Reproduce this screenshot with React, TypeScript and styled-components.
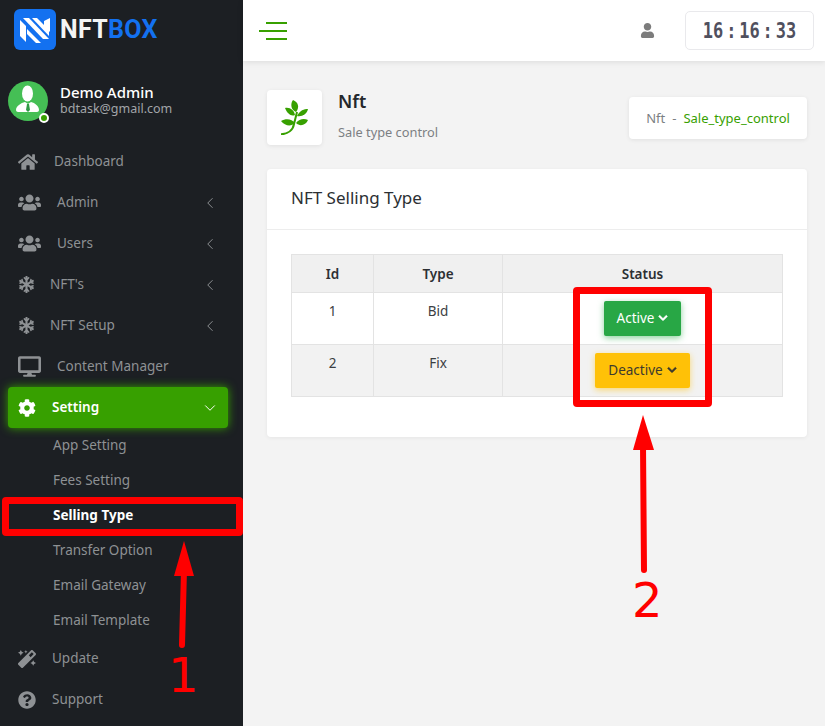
import React from "react";
import styled, { createGlobalStyle } from "styled-components";
import {
  FaHome,
  FaUsers,
  FaSnowflake,
  FaDesktop,
  FaCog,
  FaMagic,
  FaQuestionCircle,
  FaUser,
  FaChevronDown,
} from "react-icons/fa";
import { ChevronLeft, ChevronDown } from "lucide-react";

const GREEN = "#37a000";
const RED = "#ff0000";

const GlobalStyle = createGlobalStyle`
  html, body {
    margin: 0;
    padding: 0;
    height: 100%;
    overflow: hidden;
  }
  body {
    font-family: "Noto Sans", "Open Sans", sans-serif;
    background: #f3f3f3;
  }
  * { box-sizing: border-box; }
`;

const Shell = styled.div`
  position: relative;
  display: flex;
  width: 825px;
  height: 726px;
  overflow: hidden;
`;

const Sidebar = styled.aside`
  flex: 0 0 243px;
  background: #1c1f23;
  display: flex;
  flex-direction: column;
`;

const Brand = styled.div`
  display: flex;
  align-items: center;
  height: 58px;
  padding: 0 0 0 14px;
  gap: 4px;
`;

const BrandName = styled.span`
  font-family: "Roboto", sans-serif;
  font-size: 25px;
  font-weight: 700;
  letter-spacing: 0.3px;
  color: #f4f4f4;

  b {
    color: #1371f0;
    font-weight: 700;
  }
`;

const UserBlock = styled.div`
  display: flex;
  align-items: center;
  gap: 12px;
  padding: 3px 0 0 8px;
  height: 83px;
`;

const Avatar = styled.div`
  position: relative;
  width: 40px;
  height: 40px;
  border-radius: 50%;
  background: #45bf55;
`;

const OnlineDot = styled.span`
  position: absolute;
  right: -1px;
  bottom: -2px;
  width: 10px;
  height: 10px;
  border-radius: 50%;
  background: ${GREEN};
  border: 2px solid #fff;
`;

const UserText = styled.div`
  display: flex;
  flex-direction: column;
  margin-top: -4px;
`;

const UserName = styled.span`
  font-size: 15px;
  line-height: 18px;
  font-weight: 500;
  color: #fff;
`;

const UserMail = styled.span`
  font-size: 12.5px;
  line-height: 15px;
  color: #a2a5a9;
`;

const Nav = styled.nav`
  display: flex;
  flex-direction: column;
`;

const NavItem = styled.div<{ $active?: boolean; $gap: number }>`
  display: flex;
  align-items: center;
  height: 41px;
  margin: 0 15px 0 8px;
  padding: 0 9px 0 10px;
  gap: ${(p) => p.$gap}px;
  border-radius: 4px;
  font-size: 13.5px;
  color: ${(p) => (p.$active ? "#fff" : "#8e9194")};
  font-weight: ${(p) => (p.$active ? 600 : 400)};
  background: ${(p) => (p.$active ? GREEN : "transparent")};
  box-shadow: ${(p) => (p.$active ? `0 0 10px ${GREEN}` : "none")};
`;

const NavIconSlot = styled.span<{ $active?: boolean }>`
  display: inline-flex;
  align-items: center;
  color: ${(p) => (p.$active ? "#fff" : "#8e9194")};
`;

const NavLabel = styled.span`
  flex: 1;
  white-space: nowrap;
  padding-bottom: 2px;
`;

const SubNav = styled.div`
  display: flex;
  flex-direction: column;
  padding: 0 0 0 53px;
`;

const SubItem = styled.div<{ $active?: boolean }>`
  height: 35px;
  line-height: 35px;
  font-size: 13.5px;
  white-space: nowrap;
  color: ${(p) => (p.$active ? "#fff" : "#8e9194")};
  font-weight: ${(p) => (p.$active ? 700 : 400)};
`;

const Main = styled.main`
  flex: 1;
  display: flex;
  flex-direction: column;
  min-width: 0;
`;

const TopBar = styled.header`
  height: 61px;
  background: #fff;
  box-shadow: 0 1px 6px rgba(0, 0, 0, 0.1);
  display: flex;
  align-items: center;
  padding: 0 11px 0 16px;
`;

const Burger = styled.div`
  display: flex;
  flex-direction: column;
  align-items: flex-end;
  gap: 6px;
  width: 28px;
  flex: 0 0 28px;
`;

const BurgerLine = styled.span<{ $w: number }>`
  display: block;
  height: 2px;
  width: ${(p) => p.$w}px;
  background: ${GREEN};
`;

const TopRight = styled.div`
  margin-left: auto;
  display: flex;
  align-items: center;
  gap: 30px;
  color: #7c7c7c;
`;

const Clock = styled.div`
  width: 129px;
  height: 39px;
  border: 1px solid #e9e9ec;
  border-radius: 5px;
  display: flex;
  align-items: center;
  justify-content: center;
  gap: 6px;
  font-family: "DejaVu Sans Mono", monospace;
  font-size: 17px;
  font-weight: 700;
  color: #50505e;
`;

const ClockPart = styled.span`
  display: inline-block;
  transform: scaleY(1.2);
`;

const ClockColon = styled(ClockPart)`
  width: 4px;
  display: inline-flex;
  justify-content: center;
`;

const Content = styled.div`
  padding: 29px 18px 0 24px;
  display: flex;
  flex-direction: column;
  gap: 24px;
`;

const PageHead = styled.div`
  display: flex;
  align-items: flex-start;
`;

const LeafBox = styled.div`
  width: 55px;
  height: 55px;
  background: #fff;
  border-radius: 4px;
  box-shadow: 0 1px 4px rgba(0, 0, 0, 0.08);
  display: flex;
  align-items: center;
  justify-content: center;
`;

const PageTitles = styled.div`
  margin-left: 16px;
  display: flex;
  flex-direction: column;
`;

const PageTitle = styled.h1`
  margin: -1px 0 0;
  font-size: 18px;
  line-height: 24px;
  font-weight: 600;
  color: #24272b;
`;

const PageSub = styled.span`
  margin-top: 9px;
  font-size: 12.8px;
  line-height: 20px;
  color: #7c7f83;
`;

const Crumbs = styled.div`
  margin: 7px 0 0 auto;
  height: 42px;
  width: 178px;
  background: #fff;
  border-radius: 4px;
  box-shadow: 0 1px 4px rgba(0, 0, 0, 0.08);
  display: flex;
  align-items: center;
  justify-content: center;
  gap: 7px;
  font-size: 13px;
  color: #7c7f83;
  white-space: nowrap;
`;

const CrumbActive = styled.span`
  color: ${GREEN};
`;

const Card = styled.section`
  height: 268px;
  background: #fff;
  border-radius: 4px;
  box-shadow: 0 1px 4px rgba(0, 0, 0, 0.06);
`;

const CardHead = styled.div`
  height: 61px;
  border-bottom: 1px solid #ededed;
  display: flex;
  align-items: center;
  padding: 0 24px 3px;
  font-size: 17px;
  color: #2c2f33;
`;

const CardBody = styled.div`
  padding: 24px 24px 0;
`;

const Table = styled.table`
  width: 491px;
  table-layout: fixed;
  border-collapse: collapse;
  font-size: 13.5px;
  color: #3b3e42;
`;

const Th = styled.th<{ $w: number }>`
  width: ${(p) => p.$w}px;
  height: 38px;
  background: #f0f0f0;
  border: 1px solid #e3e3e3;
  font-weight: 600;
  color: #2c2f33;
`;

const Row = styled.tr<{ $shaded?: boolean }>`
  background: ${(p) => (p.$shaded ? "#f2f2f2" : "#fff")};
`;

const Td = styled.td`
  height: 52px;
  border: 1px solid #e3e3e3;
  text-align: center;
  vertical-align: top;
  padding-top: 9px;
  line-height: 18px;
`;

const StatusTd = styled(Td)`
  padding: 8px 0 0;
`;

const StatusButton = styled.button<{ $bg: string; $fg: string }>`
  display: inline-flex;
  align-items: center;
  justify-content: center;
  gap: 4px;
  height: 35px;
  padding: 0 13px 2px;
  border: none;
  border-radius: 2px;
  font-family: inherit;
  font-size: 13.5px;
  background: ${(p) => p.$bg};
  color: ${(p) => p.$fg};
  box-shadow: 0 2px 6px ${(p) => p.$bg}88;

  svg {
    stroke: currentColor;
    stroke-width: 30px;
  }
`;

const RedBox = styled.div<{ $l: number; $t: number; $w: number; $h: number }>`
  position: absolute;
  left: ${(p) => p.$l}px;
  top: ${(p) => p.$t}px;
  width: ${(p) => p.$w}px;
  height: ${(p) => p.$h}px;
  border: 7px solid ${RED};
  border-radius: 4px;
`;

const Digit = styled.span<{ $l: number; $t: number }>`
  position: absolute;
  left: ${(p) => p.$l}px;
  top: ${(p) => p.$t}px;
  font-family: "DejaVu Sans", sans-serif;
  font-size: 48px;
  line-height: 48px;
  color: ${RED};
`;

const ArrowLayer = styled.svg`
  position: absolute;
  left: 0;
  top: 0;
  pointer-events: none;
`;

const LogoMark = () => (
  <svg width="42" height="41" viewBox="0 0 42 41">
    <rect width="42" height="41" rx="6" fill="#1371f0" />
    <g fill="#fff">
      <path d="M6 11l6 6v16l-6-6z" />
      <path d="M9 9h6l20 21h-6z" />
      <path d="M18 9h5l12 12v6z" />
      <path d="M13 20l14 14h-5l-9-9z" />
      <path d="M30 12l6-3v14l-6-6z" />
    </g>
  </svg>
);

const AvatarFigure = () => (
  <svg width="40" height="40" viewBox="0 0 40 40">
    <ellipse cx="19.5" cy="12.5" rx="5.5" ry="8" fill="#fff" />
    <path d="M8 29c0-4 5-7 9-8l3 2 3-2c4 1 8 4 8 8 0 1-1 2-2 2H10c-1 0-2-1-2-2z" fill="#fff" />
    <path d="M19 23h2l1 6-2 2-2-2z" fill="#2f9a46" />
  </svg>
);

const LeafIcon = () => (
  <svg width="27" height="35" viewBox="9 8 27 35" fill={GREEN}>
    <path d="M9 42.3C16 42 21 38 22 32L25 20" fill="none" stroke={GREEN} strokeWidth="2" />
    <path d="M24 20C19 18 18 12 21 8C26 10 28 15 24 20z" />
    <path d="M23 23C19 25 15 21 13 16C18 15 22 18 23 23z" />
    <path d="M25 24C28 18 32 17 36 17C35 22 30 25 25 24z" />
    <path d="M23 31C19 35 13 34 9 29C14 26 20 27 23 31z" />
    <path d="M24 31C27 27 32 26 36 28C34 33 28 35 24 31z" />
  </svg>
);

const App = () => {
  return (
    <Shell>
      <GlobalStyle />
      <Sidebar>
        <Brand>
          <LogoMark />
          <BrandName>
            NFT<b>BOX</b>
          </BrandName>
        </Brand>
        <UserBlock>
          <Avatar>
            <AvatarFigure />
            <OnlineDot />
          </Avatar>
          <UserText>
            <UserName>Demo Admin</UserName>
            <UserMail>bdtask@gmail.com</UserMail>
          </UserText>
        </UserBlock>
        <Nav>
          <NavItem $gap={16}>
            <NavIconSlot><FaHome size={20} /></NavIconSlot>
            <NavLabel>Dashboard</NavLabel>
          </NavItem>
          <NavItem $gap={16}>
            <NavIconSlot><FaUsers size={23} /></NavIconSlot>
            <NavLabel>Admin</NavLabel>
            <ChevronLeft size={18} strokeWidth={1.3} />
          </NavItem>
          <NavItem $gap={16}>
            <NavIconSlot><FaUsers size={23} /></NavIconSlot>
            <NavLabel>Users</NavLabel>
            <ChevronLeft size={18} strokeWidth={1.3} />
          </NavItem>
          <NavItem $gap={15}>
            <NavIconSlot><FaSnowflake size={17} /></NavIconSlot>
            <NavLabel>NFT's</NavLabel>
            <ChevronLeft size={18} strokeWidth={1.3} />
          </NavItem>
          <NavItem $gap={15}>
            <NavIconSlot><FaSnowflake size={17} /></NavIconSlot>
            <NavLabel>NFT Setup</NavLabel>
            <ChevronLeft size={18} strokeWidth={1.3} />
          </NavItem>
          <NavItem $gap={16}>
            <NavIconSlot><FaDesktop size={23} /></NavIconSlot>
            <NavLabel>Content Manager</NavLabel>
          </NavItem>
          <NavItem $active $gap={16}>
            <NavIconSlot $active><FaCog size={18} /></NavIconSlot>
            <NavLabel>Setting</NavLabel>
            <ChevronDown size={18} strokeWidth={1.3} />
          </NavItem>
          <SubNav>
            <SubItem>App Setting</SubItem>
            <SubItem>Fees Setting</SubItem>
            <SubItem $active>Selling Type</SubItem>
            <SubItem>Transfer Option</SubItem>
            <SubItem>Email Gateway</SubItem>
            <SubItem>Email Template</SubItem>
          </SubNav>
          <NavItem $gap={16}>
            <NavIconSlot><FaMagic size={18} /></NavIconSlot>
            <NavLabel>Update</NavLabel>
          </NavItem>
          <NavItem $gap={16}>
            <NavIconSlot><FaQuestionCircle size={18} /></NavIconSlot>
            <NavLabel>Support</NavLabel>
          </NavItem>
        </Nav>
      </Sidebar>

      <Main>
        <TopBar>
          <Burger>
            <BurgerLine $w={21} />
            <BurgerLine $w={28} />
            <BurgerLine $w={21} />
          </Burger>
          <TopRight>
            <FaUser size={15} />
            <Clock>
              <ClockPart>16</ClockPart>
              <ClockColon>:</ClockColon>
              <ClockPart>16</ClockPart>
              <ClockColon>:</ClockColon>
              <ClockPart>33</ClockPart>
            </Clock>
          </TopRight>
        </TopBar>
        <Content>
          <PageHead>
            <LeafBox><LeafIcon /></LeafBox>
            <PageTitles>
              <PageTitle>Nft</PageTitle>
              <PageSub>Sale type control</PageSub>
            </PageTitles>
            <Crumbs>
              <span>Nft</span>
              <span>-</span>
              <CrumbActive>Sale_type_control</CrumbActive>
            </Crumbs>
          </PageHead>
          <Card>
            <CardHead>NFT Selling Type</CardHead>
            <CardBody>
              <Table>
                <thead>
                  <tr>
                    <Th $w={82}>Id</Th>
                    <Th $w={129}>Type</Th>
                    <Th $w={280}>Status</Th>
                  </tr>
                </thead>
                <tbody>
                  <Row>
                    <Td>1</Td>
                    <Td>Bid</Td>
                    <StatusTd>
                      <StatusButton $bg="#28a745" $fg="#fff">
                        Active <FaChevronDown size={10} />
                      </StatusButton>
                    </StatusTd>
                  </Row>
                  <Row $shaded>
                    <Td>2</Td>
                    <Td>Fix</Td>
                    <StatusTd>
                      <StatusButton $bg="#ffc107" $fg="#3d3a2e">
                        Deactive <FaChevronDown size={10} />
                      </StatusButton>
                    </StatusTd>
                  </Row>
                </tbody>
              </Table>
            </CardBody>
          </Card>
        </Content>
      </Main>

      {/* red annotations sitting on top of the screenshot */}
      <RedBox $l={2} $t={497} $w={241} $h={39} />
      <RedBox $l={573} $t={287} $w={139} $h={120} />
      <ArrowLayer width="825" height="726" viewBox="0 0 825 726">
        <path d="M182 645L184 570" stroke={RED} strokeWidth="6" strokeLinecap="round" fill="none" />
        <path d="M184 541L174 576H194z" fill={RED} />
        <path d="M644 570L643 445" stroke={RED} strokeWidth="6" strokeLinecap="round" fill="none" />
        <path d="M643 415L633 450H654z" fill={RED} />
      </ArrowLayer>
      <Digit $l={168} $t={651}>1</Digit>
      <Digit $l={632} $t={576}>2</Digit>
    </Shell>
  );
};

export default App;
